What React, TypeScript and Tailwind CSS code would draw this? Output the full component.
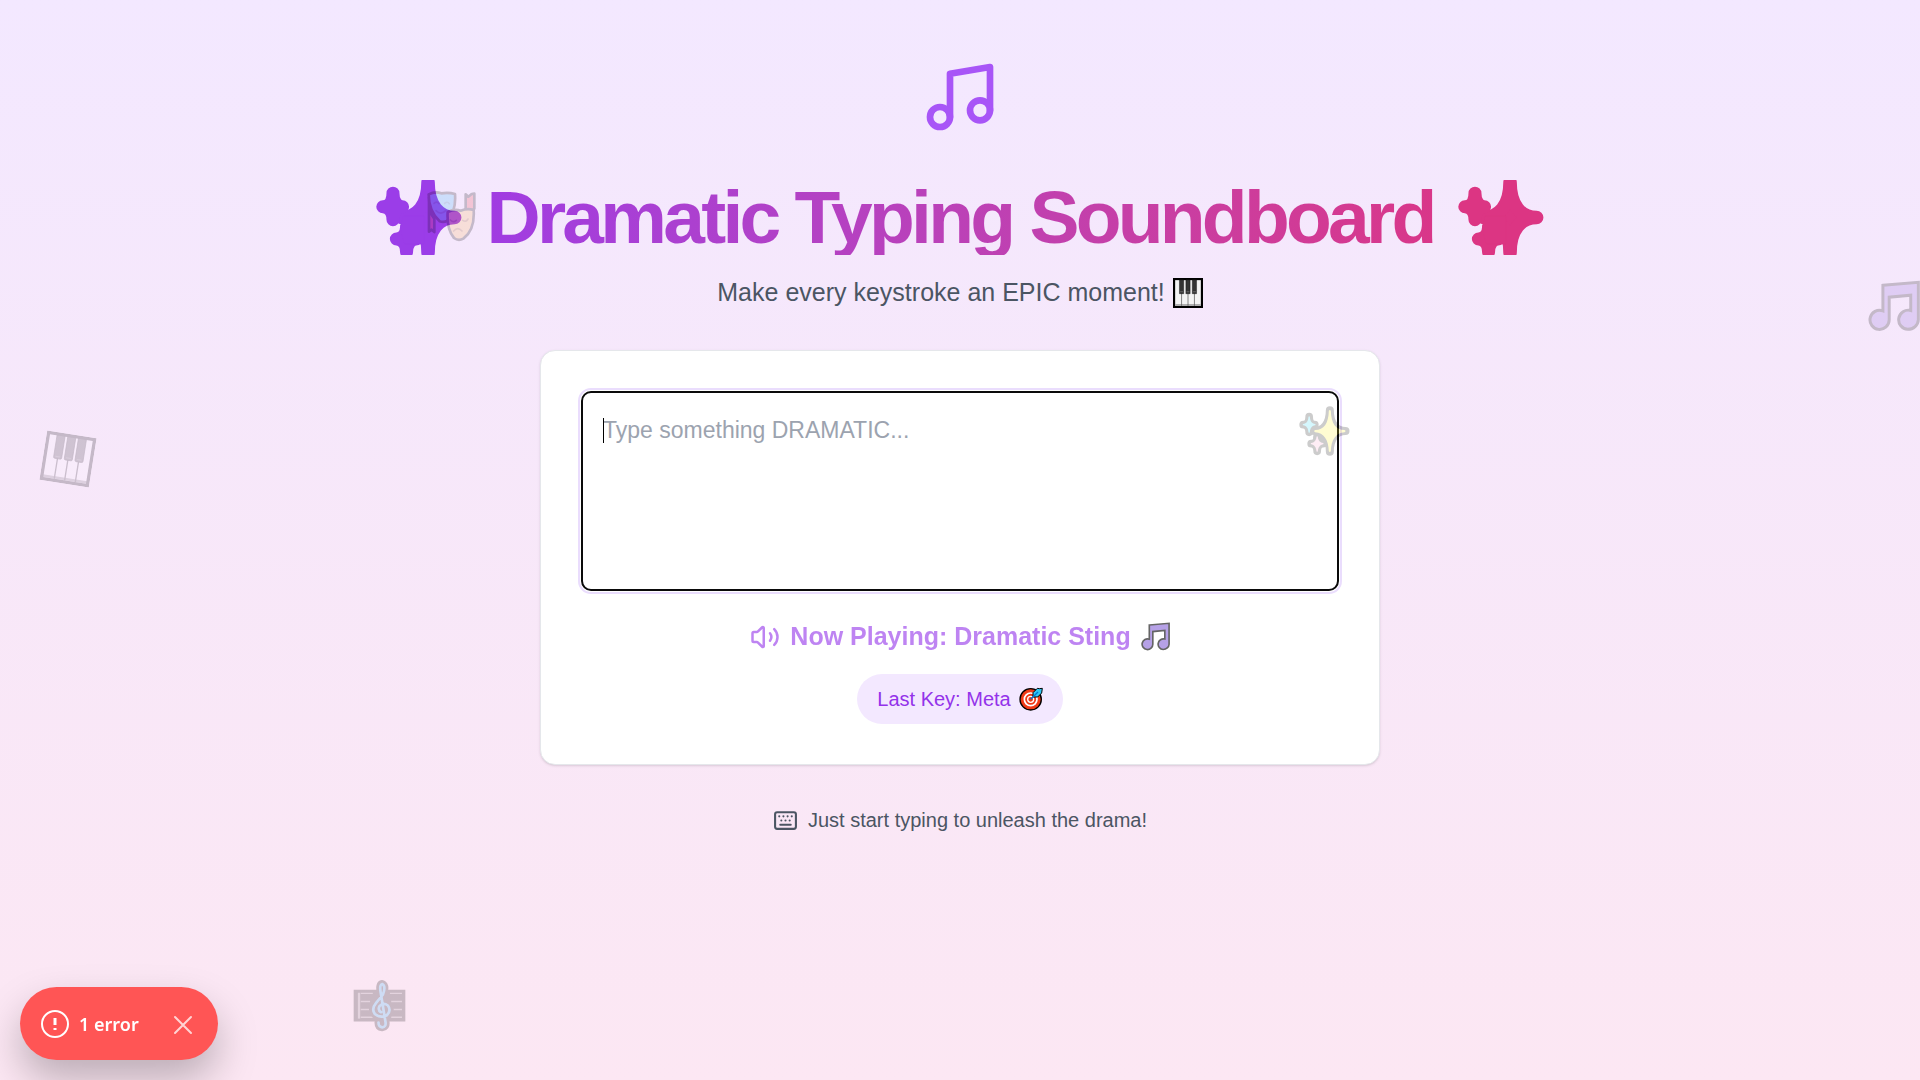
import { Keyboard, Music, Volume2 } from "lucide-react";

const bigStar =
  "M205 92 Q208 88 211 92 C212 130 226 150 252 150 Q258 153 252 157 C226 158 212 180 211 214 Q208 218 205 214 C204 180 190 158 164 157 Q158 153 164 150 C190 150 204 130 205 92Z";
const blueStar =
  "M144 110 Q146 107 148 110 C149 124 154 130 164 132 Q167 134 164 136 C154 138 149 144 148 157 Q146 160 144 157 C143 144 138 138 128 136 Q125 134 128 132 C138 130 143 124 144 110Z";
const pinkStar =
  "M168 170 Q170 167 172 170 C173 182 179 187 188 189 Q191 191 188 193 C179 195 173 201 172 214 Q170 217 168 214 C167 201 161 195 152 193 Q149 191 152 189 C161 187 167 182 168 170Z";

const bigEdge =
  "M208 91 C208 132 228 153 255 153 C228 153 208 174 208 215 C208 174 188 153 161 153 C188 153 208 132 208 91Z";
const blueEdge =
  "M146 110 C146 126 154 134 163 134 C154 134 146 142 146 157 C146 142 138 134 128 134 C138 134 146 126 146 110Z";
const pinkEdge =
  "M170 170 C170 183 178 191 187 191 C178 191 170 199 170 214 C170 199 162 191 152 191 C162 191 170 183 170 170Z";

function Sparkles({ className, flat = false }: { className: string; flat?: boolean }) {
  const edge = flat ? "currentColor" : "#000";
  return (
    <svg viewBox="116 78 152 150" className={className} aria-hidden="true">
      <g fill={edge} stroke={edge} strokeLinejoin="round" strokeWidth="24">
        <path d={bigEdge} />
        <path d={blueEdge} strokeWidth="23" />
        <path d={pinkEdge} strokeWidth="23" />
        <path d="M164 150H200V200H166L159 172Z" strokeWidth="1" />
      </g>
      {!flat && (
        <>
          <path d={blueStar} fill="#2fd6f5" />
          <path d={pinkStar} fill="#f8a3cd" />
          <path d={bigStar} fill="#fcee21" />
        </>
      )}
    </svg>
  );
}

function Notes({ className }: { className: string }) {
  return (
    <svg viewBox="83 61 157 157" className={className} aria-hidden="true">
      <path
        d="M128 77 L235 68 V181 A32 30 0 0 1 203 210 A29 29 0 1 1 212 153 V107 L147 113 V181 A29 29 0 1 1 128 154Z"
        fill="#8764d8"
        stroke="#000"
        strokeWidth="9"
      />
    </svg>
  );
}

function Piano({ className }: { className: string }) {
  return (
    <svg viewBox="0 0 84 84" className={className} aria-hidden="true">
      <rect x="3" y="3" width="78" height="78" fill="#f4f4f4" stroke="#000" strokeWidth="6" />
      <rect x="6" y="73" width="72" height="5" fill="#aaa" />
      <path d="M24 42V78M42 42V78M60 42V78" stroke="#555" strokeWidth="2" />
      <path d="M18 5h12v39h-12zM36 5h12v39h-12zM54 5h12v39h-12z" fill="#333" stroke="#000" strokeWidth="1" />
      <path d="M20 37h8v3h-8zM38 37h8v3h-8zM56 37h8v3h-8z" fill="#666" />
    </svg>
  );
}

function TiltedPiano({ className }: { className: string }) {
  return (
    <svg viewBox="0 0 148 148" className={className} aria-hidden="true">
      <path d="M8 8h132v132H8z" fill="#fff" />
      <path d="M8 130h132v8H8z" fill="#777" />
      <path d="M43 70v68M74 70v68M106 70v68" stroke="#222" strokeWidth="4" />
      <path d="M31 8h24v66q0 4-4 4H35q-4 0-4-4zM63 8h24v66q0 4-4 4H67q-4 0-4-4zM95 8h24v66q0 4-4 4H99q-4 0-4-4z" fill="#333" stroke="#000" strokeWidth="2" />
      <path d="M36 70h14v3H36zM68 70h14v3H68zM100 70h14v3h-14z" fill="#666" />
      <rect x="5" y="5" width="138" height="138" fill="none" stroke="#000" strokeWidth="10" />
    </svg>
  );
}

function Masks({ className }: { className: string }) {
  return (
    <svg viewBox="195 90 156 156" className={className} aria-hidden="true">
      <g stroke="#000" strokeLinejoin="round" strokeWidth="8">
        <path d="M207 112V215l8-6 8 7v-40l-8-12z" fill="#e83b3b" />
        <path d="M317 150V103l8 7 10-8 8-1v45l-12 12z" fill="#e83b3b" />
        <path d="M206 103q19-10 38-3 21-4 41 2 4 54-24 81-11 5-22 1-33-30-33-81z" fill="#31b8f2" />
        <path d="M263 156q20-10 39-4 20-8 39-2 4 60-31 86-15 8-28-2-22-25-19-78z" fill="#fdba4d" />
      </g>
      <g fill="none" stroke="#1678a8" strokeWidth="5" strokeLinecap="round">
        <path d="M222 130q8-8 15 1M254 130q8-7 14 1M228 152q15 15 30-1" />
      </g>
      <g fill="none" stroke="#9c5a13" strokeWidth="5" strokeLinecap="round">
        <path d="M271 180q9 9 18 1M308 181q10 7 16-4M281 213q12-14 25 0" />
      </g>
    </svg>
  );
}

function Score({ className }: { className: string }) {
  const clef =
    "M1136 188q0 13 11 14 12-1 10-15l-15-92q-3-21 5-22 12 6 2 32l-20 24q-15 18-4 33 16 14 36 4 14-14 3-29-14-10-25 2-6 12 5 18";
  return (
    <svg viewBox="1060 58 158 158" className={className} aria-hidden="true">
      <path d="M1062 90h154v95h-154z" />
      <path d="M1078 99v77" stroke="#888" strokeWidth="7" />
      <path d="M1083 101h36M1083 125h28M1083 149h25M1083 172h36M1170 101h36M1174 125h32M1180 149h26M1174 172h32" stroke="#888" strokeWidth="4" />
      <path d={clef} fill="#000" stroke="#000" strokeWidth="24" strokeLinecap="round" strokeLinejoin="round" />
      <path d={clef} fill="none" stroke="#21b5f5" strokeWidth="8" strokeLinecap="round" strokeLinejoin="round" />
    </svg>
  );
}

function Target({ className }: { className: string }) {
  return (
    <svg viewBox="0 0 72 72" className={className} aria-hidden="true">
      <circle cx="35" cy="37" r="32" fill="#f03a17" stroke="#000" strokeWidth="4" />
      <circle cx="35" cy="37" r="19" fill="none" stroke="#fff" strokeWidth="5" />
      <circle cx="35" cy="37" r="9" fill="none" stroke="#fff" strokeWidth="4" />
      <path d="M42 30V17L55 4l6 1 9-1-2 14-12 12z" fill="#32c8f4" stroke="#000" strokeWidth="3" strokeLinejoin="round" />
      <path d="M35 37L57 15" stroke="#0078d7" strokeWidth="4" />
    </svg>
  );
}

export default function App() {
  return (
    <div className="relative min-h-screen overflow-hidden bg-linear-to-b from-[#f3e8ff] to-[#fce7f3] font-['Liberation_Sans',Arial,sans-serif]">
      <main className="flex flex-col items-center px-5 pt-[57px] pb-10">
        <Music className="size-20 text-[#a855f7]" />
        <h1 className="mt-[43px] flex items-center gap-6 text-[75px] leading-none font-bold tracking-tighter whitespace-nowrap">
          <span className="flex h-[75px] w-[86px] items-center overflow-hidden text-[#9b3de8]">
            <Sparkles flat className="h-[85px] w-[86px] shrink-0" />
          </span>
          <span className="bg-linear-to-r from-[#a03ce2] to-[#d93689] bg-clip-text text-transparent">Dramatic Typing Soundboard</span>
          <span className="flex h-[75px] w-[86px] items-center overflow-hidden text-[#dc3583]">
            <Sparkles flat className="h-[85px] w-[86px] shrink-0" />
          </span>
        </h1>
        <p className="mt-5 flex items-center gap-2 text-[25px] leading-[35px] text-[#4b5563]">
          Make every keystroke an EPIC moment!
          <Piano className="size-[30px]" />
        </p>

        <section className="mt-10 flex w-full max-w-[840px] flex-col items-center rounded-[15px] border border-[#e5e7eb] bg-white p-10 shadow-sm">
          <div className="relative w-full">
            <textarea
              autoFocus
              aria-label="Dramatic text"
              placeholder="Type something DRAMATIC..."
              className="block h-[200px] w-full resize-none rounded-[10px] border-2 border-[#0a0a0a] px-5 py-5 text-[23px] leading-[34px] text-black caret-transparent outline-2 outline-offset-1 outline-[#eaddfd] placeholder:text-[#9ca3af]"
            />
            <span className="pointer-events-none absolute top-[27px] left-[22px] h-[25px] w-px bg-black" />
          </div>
          <div className="mt-7 flex items-center gap-2.5 text-[25px] leading-[35px] font-bold text-[#9333ea] opacity-60">
            <Volume2 className="size-[30px]" />
            <span>Now Playing: Dramatic Sting</span>
            <Notes className="size-[29px]" />
          </div>
          <div className="mt-5 flex items-center gap-2 rounded-full bg-[#f3e8ff] px-5 py-2.5 text-[20px] leading-[30px] text-[#9333ea]">
            Last Key: Meta
            <Target className="size-6" />
          </div>
        </section>

        <footer className="mt-10 flex items-center gap-2.5 text-[20px] leading-[30px] text-[#4b5563]">
          <Keyboard className="size-[25px]" />
          Just start typing to unleash the drama!
        </footer>
      </main>

      <div className="pointer-events-none absolute inset-0 overflow-hidden">
        <Masks className="absolute top-[190px] left-[425px] size-[52px] opacity-20" />
        <Notes className="absolute top-[280px] left-[1868px] size-[52px] opacity-20" />
        <TiltedPiano className="absolute top-[434px] left-[43px] size-[50px] rotate-[9deg] opacity-20" />
        <Sparkles className="absolute top-[406px] left-[1299px] h-[50px] w-[51px] opacity-20" />
        <Score className="absolute top-[979px] left-[353px] size-[53px] opacity-20" />
      </div>

      <div
        role="alert"
        className="fixed bottom-5 left-5 flex h-[73px] items-center rounded-full bg-[#ff5555] pr-[23px] pl-5 font-['Noto_Sans','Open_Sans',sans-serif] text-[18px] font-semibold text-white shadow-[0_20px_40px_rgba(0,0,0,0.25)]"
      >
        <svg viewBox="0 0 30 30" className="size-[30px]" fill="none" stroke="currentColor" strokeWidth="2" aria-hidden="true">
          <circle cx="15" cy="15" r="13" />
          <path d="M15 9v7M15 19v2" strokeWidth="3" />
        </svg>
        <span className="ml-[9px] pt-0.5">1 error</span>
        <button type="button" aria-label="Dismiss" className="ml-8 pt-0.5 text-white/75">
          <svg viewBox="0 0 24 24" className="size-6" fill="none" stroke="currentColor" strokeWidth="2" strokeLinecap="round" aria-hidden="true">
            <path d="M4 4l16 16M20 4L4 20" />
          </svg>
        </button>
      </div>
    </div>
  );
}
